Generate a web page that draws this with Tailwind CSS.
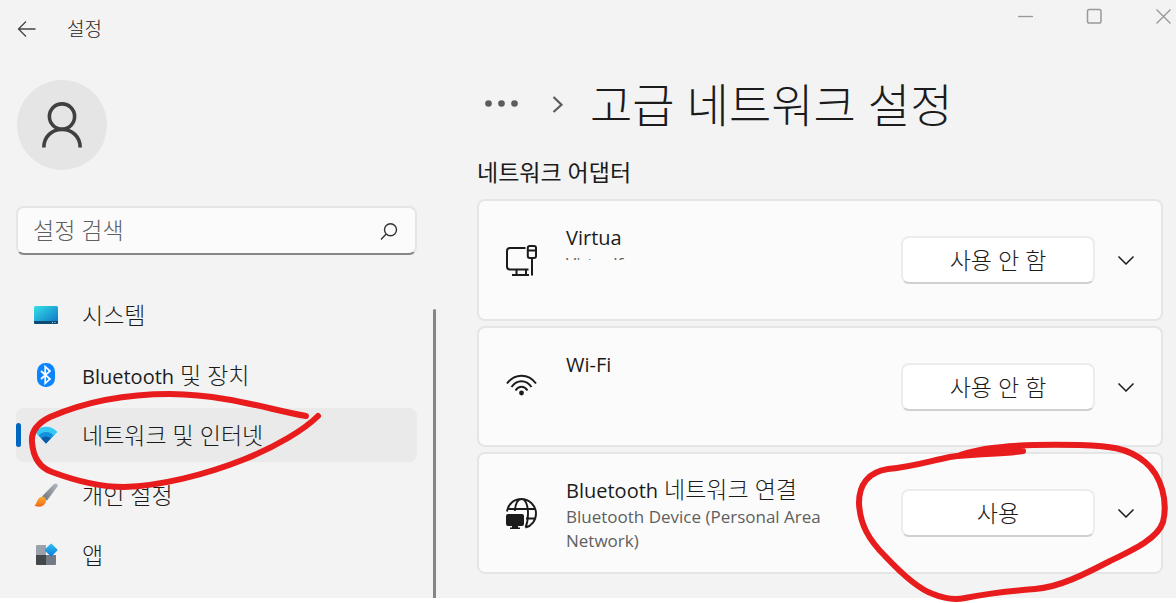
<!DOCTYPE html>
<html lang="ko">
<head>
  <meta charset="UTF-8" />
  <meta name="viewport" content="width=device-width, initial-scale=1.0" />
  <title>설정</title>

  <!-- Tailwind -->
  <script src="https://cdn.jsdelivr.net/npm/@tailwindcss/browser@4"></script>

  <style>
    body { font-family: "Open Sans", "Noto Sans CJK KR", sans-serif; }
  </style>
</head>

<body class="relative flex flex-col min-h-screen bg-white pb-[5px] text-[#1b1b1b]">

  <div class="flex-1 flex flex-col bg-[#f3f3f3]">

    <!-- Title bar -->
    <header class="flex justify-between items-start h-[58px]">
      <div class="flex items-center gap-[30px] h-full pl-[17px]">
        <button aria-label="뒤로">
          <svg class="block w-5 h-5" viewBox="0 0 20 20" fill="none" stroke="#444" stroke-width="1.3">
            <path d="M18.500 10H1.500M9 2.500L1.500 10l7.500 7.500" />
          </svg>
        </button>
        <span class="text-[19px] font-light">설정</span>
      </div>
      <div class="flex gap-[53px] pt-2 pr-[5px]">
        <button aria-label="최소화">
          <svg class="block w-4 h-4" viewBox="0 0 16 16" fill="none" stroke="#999" stroke-width="1.3"><path d="M1 8.500h15" /></svg>
        </button>
        <button aria-label="최대화">
          <svg class="block w-4 h-4" viewBox="0 0 16 16" fill="none" stroke="#999" stroke-width="1.5"><rect x="1.500" y="1.500" width="13.500" height="13.500" rx="1.800" /></svg>
        </button>
        <button aria-label="닫기">
          <svg class="block w-4 h-4" viewBox="0 0 16 16" fill="none" stroke="#999" stroke-width="1.4"><path d="M1.500 1.500l14 14M15.500 1.500l-14 14" /></svg>
        </button>
      </div>
    </header>

    <div class="flex flex-1">

      <!-- Sidebar -->
      <aside class="flex flex-col w-[436px] shrink-0 pl-4 pt-[22px]">
        <div class="flex items-center justify-center w-[90px] h-[90px] ml-px rounded-full bg-[#e5e5e5]">
          <svg class="w-[42px] h-[48px]" viewBox="0 0 42 48" fill="none" stroke="#404040" stroke-width="3.6">
            <circle cx="21" cy="15.500" r="12.600" />
            <path d="M2.800 46.500C2.800 35.500 11 28.500 21 28.500s18.200 7 18.200 18" />
          </svg>
        </div>

        <div class="flex items-center h-[49px] mt-9 mr-[19px] pl-[15px] pr-[17px] rounded-lg border-2 border-[#e5e5e5] border-b-[#868686] bg-[#fbfbfb]">
          <input type="text" aria-label="설정 검색" placeholder="설정 검색" class="flex-1 min-w-0 bg-transparent outline-none text-[23px] font-light placeholder:text-[#5f5f5f]" />
          <svg class="w-[18px] h-[18px]" viewBox="0 0 18 18" fill="none" stroke="#333" stroke-width="1.4">
            <circle cx="10.500" cy="7.700" r="6" />
            <path d="M6.200 12.100L1 17.500" />
          </svg>
        </div>

        <div class="flex flex-1 justify-between mt-[33px]">
          <nav class="flex flex-col gap-1.5 w-[401px] text-[23px] font-light">
            <a href="#" class="flex items-center gap-[23px] h-[54px] pl-[17px] rounded-lg">
              <svg class="w-[26px] h-[26px]" viewBox="0 0 26 26">
                <defs>
                  <linearGradient id="sys" x1="0" y1="0" x2="1" y2="1"><stop offset="0" stop-color="#36e0ea" /><stop offset="1" stop-color="#0d70c4" /></linearGradient>
                </defs>
                <rect x="1" y="4" width="24" height="18" rx="1.5" fill="url(#sys)" />
                <path d="M1 19h24v1.500a1.500 1.500 0 0 1-1.500 1.500h-21A1.500 1.500 0 0 1 1 20.500z" fill="#0b4a72" />
                <path d="M19 20.500h1M21.500 20.500h1" stroke="#cde" />
              </svg>
              <span>시스템</span>
            </a>
            <a href="#" class="flex items-center gap-[23px] h-[54px] pl-[17px] rounded-lg">
              <svg class="w-[26px] h-[26px]" viewBox="0 0 26 26">
                <rect x="4" y="1" width="18" height="24" rx="8.500" fill="#0a84ff" />
                <path d="M8 9l9 8-4.800 4.300V4.700L17 9l-9 8" fill="none" stroke="#fff" stroke-width="1.700" />
              </svg>
              <span><span class="text-xl font-normal">Bluetooth</span> 및 장치</span>
            </a>
            <a href="#" aria-current="page" class="flex items-center h-[54px] rounded-lg bg-[#eaeaea]">
              <span class="w-[5px] h-6 mr-3 rounded-full bg-[#0067c0]"></span>
              <svg class="w-[26px] h-[26px] mr-[23px]" viewBox="0 0 26 26">
                <path d="M13 21.500L2 10C8 3 18 3 24.500 10z" fill="#35c8f5" />
                <path d="M13 21.500L5.500 13.500c4-4.600 11-4.600 15.200 0z" fill="#1590dd" />
                <path d="M13 21.500L8.300 16.500c2.500-2.800 7-2.800 9.500 0z" fill="#0c59a4" />
              </svg>
              <span>네트워크 및 인터넷</span>
            </a>
            <a href="#" class="flex items-center gap-[23px] h-[54px] pl-[17px] rounded-lg">
              <svg class="w-[26px] h-[26px]" viewBox="0 0 26 26">
                <defs>
                  <linearGradient id="hnd" x1="0" y1="1" x2="1" y2="0"><stop offset="0" stop-color="#68717a" /><stop offset="1" stop-color="#b4bac0" /></linearGradient>
                  <linearGradient id="tip" x1="0" y1="0" x2="0" y2="1"><stop offset="0" stop-color="#fdaa33" /><stop offset="1" stop-color="#ee6a14" /></linearGradient>
                </defs>
                <path d="M9 14.500L20.500 2.500c2-1.800 5-.8 4 2L14 18.500z" fill="url(#hnd)" />
                <path d="M8 15c3.500-1 6 1.500 4.800 5C11.500 24.500 6.500 26 1.200 23.800c2.800-1 2-7 6.800-8.800z" fill="url(#tip)" />
              </svg>
              <span>개인 설정</span>
            </a>
            <a href="#" class="flex items-center gap-[23px] h-[54px] pl-[17px] rounded-lg">
              <svg class="w-[26px] h-[26px]" viewBox="0 0 26 26">
                <defs>
                  <linearGradient id="app" x1="0" y1="0" x2="1" y2="1"><stop offset="0" stop-color="#34c3f4" /><stop offset="1" stop-color="#0a78d6" /></linearGradient>
                </defs>
                <path d="M4 3h9v10H3V4a1 1 0 0 1 1-1z" fill="#9aa1ab" />
                <path d="M3 13h10v10H4a1 1 0 0 1-1-1z" fill="#43484d" />
                <path d="M13 13h10v9a1 1 0 0 1-1 1h-9z" fill="#737a83" />
                <rect x="13.300" y="3.200" width="9.600" height="9.600" rx="1" transform="rotate(45 18.100 8)" fill="url(#app)" />
              </svg>
              <span>앱</span>
            </a>
          </nav>
          <div class="w-[3px] mt-[21px] rounded-t-full bg-[#868686]"></div>
        </div>
      </aside>

      <!-- Content -->
      <main class="flex-1 min-w-0 pl-[41px] pr-[13px] pt-3">
        <div class="flex items-center h-[68px] pl-2">
          <button aria-label="상위 메뉴">
            <svg class="block w-[34px] h-2" viewBox="0 0 34 8" fill="#5c5c5c">
              <circle cx="3.500" cy="3.500" r="3.300" /><circle cx="16.500" cy="3.500" r="3.300" /><circle cx="29.500" cy="3.500" r="3.300" />
            </svg>
          </button>
          <svg class="w-3 h-[18px] ml-[33px] mr-[26px]" viewBox="0 0 12 18" fill="none" stroke="#5c5c5c" stroke-width="2.200"><path d="M1.500 2L9.500 9.700l-8 7.300" /></svg>
          <h1 class="text-[46px] leading-[68px] font-light">고급 네트워크 설정</h1>
        </div>

        <h2 class="text-[23px] leading-8 mt-[18px] mb-[11px]">네트워크 어댑터</h2>

        <ul class="flex flex-col gap-[5px]">
          <li class="flex items-center min-h-[122px] pl-[27px] pr-[26px] rounded-lg border-2 border-[#e5e5e5] bg-[#fbfbfb]">
            <svg class="w-[31px] h-[31px] shrink-0" viewBox="0 0 31 31" fill="none" stroke="#1b1b1b" stroke-width="2">
              <path d="M19.500 3H4Q1 3 1 6v15.500q0 3 3 3h18.500M10.500 24.500v5M20 24.500v5M6 30h17M26 13v17.500M22 5.500h8" />
              <rect x="21.800" y="1" width="8.200" height="12" rx="2" />
            </svg>
            <div class="flex-1 self-start pt-[23px] pl-[29px] pr-8">
              <h3 class="h-7 text-xl leading-7">Virtua</h3>
              <p class="h-2 overflow-hidden text-[17px] leading-6 text-[#5f5f5f]">Virtualf</p>
            </div>
            <button class="w-[194px] h-12 shrink-0 rounded-lg border-2 border-[#ececec] border-b-[#d0d0d0] bg-white text-[23px] leading-8 font-light">사용 안 함</button>
            <button aria-label="자세히" class="ml-[22px]">
              <svg class="block w-[18px] h-[10px]" viewBox="0 0 18 10" fill="none" stroke="#1b1b1b" stroke-width="1.500"><path d="M1.500 1.500L9 9l7.500-7.500" /></svg>
            </button>
          </li>

          <li class="flex items-center min-h-[121px] pl-[27px] pr-[26px] rounded-lg border-2 border-[#e5e5e5] bg-[#fbfbfb]">
            <svg class="w-[31px] h-[31px] shrink-0" viewBox="0 0 31 31" fill="none" stroke="#1b1b1b" stroke-width="2">
              <path d="M1 12.500C8.500 2 22.500 2 30 12.500M5.500 16C11 8.300 20 8.300 25.500 16M9.500 19.500c3.500-5 8.500-5 12 0" />
              <circle cx="15.500" cy="22" r="2.400" fill="#1b1b1b" stroke="none" />
            </svg>
            <div class="flex-1 self-start pt-[23px] pl-[29px] pr-8">
              <h3 class="h-7 text-xl leading-7">Wi-Fi</h3>
            </div>
            <button class="w-[194px] h-12 shrink-0 rounded-lg border-2 border-[#ececec] border-b-[#d0d0d0] bg-white text-[23px] leading-8 font-light">사용 안 함</button>
            <button aria-label="자세히" class="ml-[22px]">
              <svg class="block w-[18px] h-[10px]" viewBox="0 0 18 10" fill="none" stroke="#1b1b1b" stroke-width="1.500"><path d="M1.500 1.500L9 9l7.500-7.500" /></svg>
            </button>
          </li>

          <li class="flex items-center min-h-[122px] pl-[27px] pr-[26px] rounded-lg border-2 border-[#e5e5e5] bg-[#fbfbfb]">
            <svg class="w-[31px] h-[31px] shrink-0" viewBox="0 0 31 31" fill="none" stroke="#1b1b1b" stroke-width="1.900">
              <path d="M1 13.500C2 6 8 1 15.500 1S30 7.500 30 15.500c0 7-4.500 12.500-10.500 14M2.500 11h26M20 20.500h8.500M8.800 13C9.500 5.500 12 1 15.500 1c4 0 6.500 6 6.500 14.500 0 6-1 10.500-2.500 14" />
              <path d="M2 16h14a2 2 0 0 1 2 2v8a2 2 0 0 1-2 2h-4v1.500h2V31H4v-1.500h2V28H2a2 2 0 0 1-2-2v-8a2 2 0 0 1 2-2z" fill="#1b1b1b" stroke="none" />
            </svg>
            <div class="flex-1 self-start pt-[21px] pl-[29px] pr-8">
              <h3 class="h-7 text-[23px] leading-7 font-light"><span class="text-xl font-normal">Bluetooth</span> 네트워크 연결</h3>
              <p class="mt-0.5 text-[17px] leading-6 text-[#5f5f5f]">Bluetooth Device (Personal Area Network)</p>
            </div>
            <button class="w-[194px] h-12 shrink-0 rounded-lg border-2 border-[#ececec] border-b-[#d0d0d0] bg-white text-[23px] leading-8 font-light">사용</button>
            <button aria-label="자세히" class="ml-[22px]">
              <svg class="block w-[18px] h-[10px]" viewBox="0 0 18 10" fill="none" stroke="#1b1b1b" stroke-width="1.500"><path d="M1.500 1.500L9 9l7.500-7.500" /></svg>
            </button>
          </li>
        </ul>
      </main>
    </div>
  </div>

  <!-- Red pen marks over the window -->
  <svg class="absolute top-0 left-0 w-[1176px] h-[603px] pointer-events-none" viewBox="0 0 1176 603" fill="none" stroke="#e81c1c" stroke-width="6" stroke-linecap="round" stroke-linejoin="round">
    <path d="M306 416C270 410 230 395 170 394C120 394 80 404 50 417C36 424 31 432 32 442C33 456 38 467 52 472C76 481 100 487 124 487C160 486 205 475 245 459C275 447 304 430 318 416" />
    <path d="M1023 451C1000 455 975 453 950 457C930 461 912 467 888 469C868 472 859 485 859 503C860 525 869 540 885 556C900 572 918 589 933 594C945 599 955 600 965 598C990 593 1010 591 1035 589C1060 587 1085 574 1110 561C1135 549 1158 538 1163 522C1168 502 1162 476 1145 462C1127 447 1108 446 1080 445C1040 444 1010 445 985 449C975 451 965 453 958 456L985 454L1023 451" />
  </svg>

</body>
</html>
